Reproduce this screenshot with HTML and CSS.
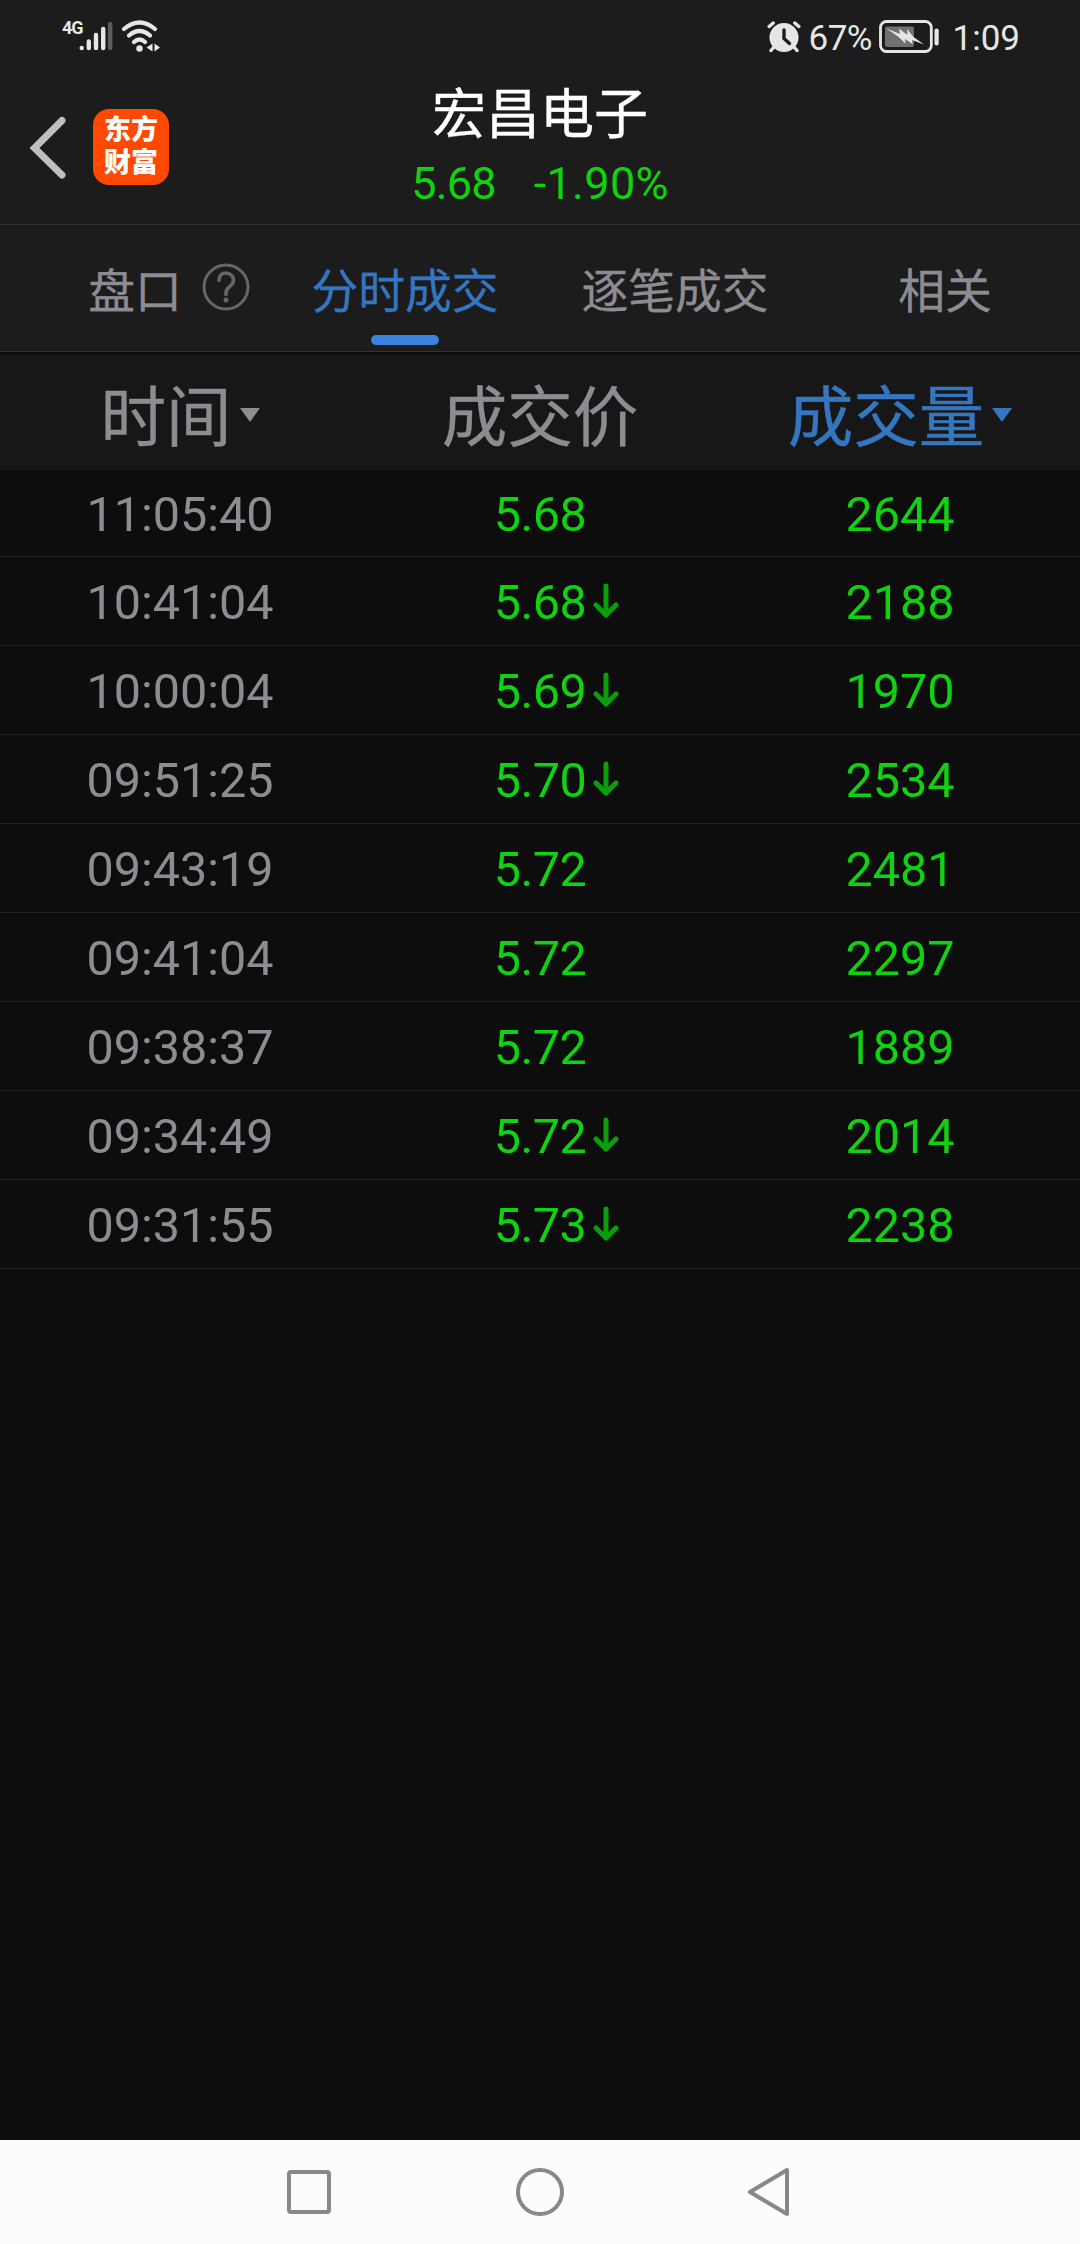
FILE: index.html
```html
<!DOCTYPE html>
<html lang="zh-CN">
<head>
  <meta charset="UTF-8" />
  <meta name="viewport" content="width=device-width, initial-scale=1.0" />
  <title>宏昌电子 - 分时成交</title>
  <link rel="stylesheet" href="styles.css">
</head>
<body>
  <div class="layout">
    <div class="status-bar">
      <div class="status-left">
        <span class="network">4G</span>
        <svg class="signal" width="34" height="32" viewBox="0 0 34 32" fill="none" stroke="#e6e6e6" stroke-width="4.4" stroke-linecap="round">
          <path d="M2.7 28v.1M9.8 21.500v6.500M17 15v13M24.200 9v19" />
          <path d="M31.200 4v24" stroke="#5c5c5c" />
        </svg>
        <svg class="wifi" width="40" height="34" viewBox="0 0 40 34" fill="none" stroke="#e6e6e6" stroke-width="4.200" stroke-linecap="round">
          <path d="M3 9q15.500-13 31 0M8 15.500q10.500-9 21 0M13 22q5.500-5 11 0" />
          <circle cx="18.500" cy="28.500" r="3.200" fill="#e6e6e6" stroke="none" />
          <path d="M31.500 23.500v8l-6-4zM33.500 23.500v8l5.500-4z" fill="#e6e6e6" stroke="none" />
        </svg>
      </div>
      <div class="status-right">
        <svg class="alarm" width="34" height="32" viewBox="0 0 34 32" fill="none" stroke="#e6e6e6" stroke-linecap="round">
          <circle cx="17" cy="16.500" r="14.500" fill="#e6e6e6" stroke="none" />
          <path d="M2.200 5.500l4-3.500M31.800 5.500l-4-3.500M7 26l-3 3.500M27 26l3 3.500" stroke-width="3.400" />
          <path d="M17 9v8.500l5.500 5" stroke="#1c1c1c" stroke-width="3.400" />
        </svg>
        <span class="percent">67%</span>
        <svg class="battery" width="62" height="34" viewBox="0 0 62 34">
          <rect x="1.500" y="1.500" width="50.800" height="30" rx="6" fill="none" stroke="#e6e6e6" stroke-width="2.800" />
          <rect x="6" y="6.500" width="29" height="20.500" rx="2" fill="#707070" />
          <path d="M7.500 8.500L21 14l-1-5.500 8.500 6.500-.5-6 6.500 8 10.500 7.500-12-4.500.5 4-7.500-5 .5 4.500-7.500-7z" fill="#e6e6e6" />
          <rect x="55.500" y="8.500" width="4.200" height="17" rx="2" fill="#e6e6e6" />
        </svg>
        <span class="clock">1:09</span>
      </div>
    </div>

    <div class="header">
      <div class="header-left">
        <svg class="back" width="40" height="66" viewBox="0 0 40 66" fill="none" stroke="#bfbfbf" stroke-width="7" stroke-linecap="round">
          <path d="M34 6.500L6.500 34 34 61" />
        </svg>
        <div class="logo"><span>东方</span><span>财富</span></div>
      </div>
      <div class="stock">
        <div class="stock-name">宏昌电子</div>
        <div class="stock-price"><span>5.68</span><span>-1.90%</span></div>
      </div>
    </div>

    <div class="tabs">
      <div class="tab">盘口
        <svg class="help" width="48" height="48" viewBox="0 0 48 48" fill="none" stroke="#666" stroke-width="3" stroke-linecap="round">
          <circle cx="24" cy="24" r="22" />
          <path d="M17 17.500C17 12.500 20 10 24 10s7.500 3 7.500 7.200c0 6.300-7.500 6.300-7.500 12.300v2" stroke-width="3.600" />
          <circle cx="24" cy="37" r="2.500" fill="#666" stroke="none" />
        </svg>
      </div>
      <div class="tab active">分时成交</div>
      <div class="tab">逐笔成交</div>
      <div class="tab">相关</div>
    </div>

    <div class="table-head">
      <div class="th">时间<i class="caret"></i></div>
      <div class="th">成交价</div>
      <div class="th sorted">成交量<i class="caret"></i></div>
    </div>

    <div class="table-body">
      <div class="row"><span class="time">11:05:40</span><span class="price">5.68</span><span class="volume">2644</span></div>
      <div class="row"><span class="time">10:41:04</span><span class="price">5.68<svg class="down" viewBox="0 0 26 36"><path d="M13 3v29M3 22l10 10 10-10" /></svg></span><span class="volume">2188</span></div>
      <div class="row"><span class="time">10:00:04</span><span class="price">5.69<svg class="down" viewBox="0 0 26 36"><path d="M13 3v29M3 22l10 10 10-10" /></svg></span><span class="volume">1970</span></div>
      <div class="row"><span class="time">09:51:25</span><span class="price">5.70<svg class="down" viewBox="0 0 26 36"><path d="M13 3v29M3 22l10 10 10-10" /></svg></span><span class="volume">2534</span></div>
      <div class="row"><span class="time">09:43:19</span><span class="price">5.72</span><span class="volume">2481</span></div>
      <div class="row"><span class="time">09:41:04</span><span class="price">5.72</span><span class="volume">2297</span></div>
      <div class="row"><span class="time">09:38:37</span><span class="price">5.72</span><span class="volume">1889</span></div>
      <div class="row"><span class="time">09:34:49</span><span class="price">5.72<svg class="down" viewBox="0 0 26 36"><path d="M13 3v29M3 22l10 10 10-10" /></svg></span><span class="volume">2014</span></div>
      <div class="row"><span class="time">09:31:55</span><span class="price">5.73<svg class="down" viewBox="0 0 26 36"><path d="M13 3v29M3 22l10 10 10-10" /></svg></span><span class="volume">2238</span></div>
    </div>

    <div class="nav-bar">
      <svg width="50" height="50" viewBox="0 0 50 50"><rect x="5" y="5" width="40" height="40" rx="2" /></svg>
      <svg width="50" height="50" viewBox="0 0 50 50"><circle cx="25" cy="25" r="22" /></svg>
      <svg width="50" height="50" viewBox="0 0 50 50"><path d="M41 3v44L4 25z" /></svg>
    </div>
  </div>
</body>
</html>
```
FILE: styles.css
```css
:root {
  --bg: #0d0d0d;
  --bar: #1c1c1c;
  --line: #333333;
  --gray: #8e8c92;
  --blue: #3476c0;
  --green: #10d210;
  --status: #e6e6e6;
}

* {
  box-sizing: border-box;
}

body, html {
  margin: 0;
  padding: 0;
  height: 100%;
  background: var(--bg);
  font-family: Roboto, "Noto Sans CJK SC", sans-serif;
}

svg {
  display: block;
  flex: none;
}

.layout {
  width: 1080px;
  height: 2244px;
  display: flex;
  flex-direction: column;
  background: var(--bg);
}

/* status bar */
.status-bar {
  height: 70px;
  display: flex;
  justify-content: space-between;
  padding: 0 62px;
  background: var(--bar);
  color: var(--status);
}

.status-left,
.status-right {
  display: flex;
  align-items: flex-start;
  padding-top: 20px;
}

.network {
  width: 17px;
  font-size: 18px;
  line-height: 16px;
  font-weight: 700;
  letter-spacing: -1px;
}

.wifi {
  margin-left: 8px;
}

.alarm {
  margin: 1px 8px 0 0;
}

.percent,
.clock {
  font-size: 35px;
  line-height: 38px;
}

.percent {
  width: 70px;
  letter-spacing: -.5px;
}

.clock {
  margin-left: 12px;
  margin-right: -2px;
}

/* header */
.header {
  height: 155px;
  display: grid;
  grid-template-columns: 360px 360px 360px;
  background: var(--bar);
  border-bottom: 1px solid var(--line);
}

.header-left {
  display: flex;
  align-items: center;
  gap: 25px;
  padding-left: 28px;
}

.logo {
  width: 76px;
  height: 76px;
  border-radius: 16px;
  display: flex;
  flex-direction: column;
  align-items: center;
  justify-content: center;
  background: #ff4800;
  color: #fff;
  font-size: 27px;
  line-height: 33px;
  font-weight: 900;
}

.stock {
  display: flex;
  flex-direction: column;
  align-items: center;
  padding-top: 12px;
}

.stock-name {
  color: #fff;
  font-size: 54px;
  line-height: 68px;
  -webkit-text-stroke: .4px;
}

.stock-price {
  display: flex;
  gap: 38px;
  color: var(--green);
  font-size: 45px;
  line-height: 68px;
}

.stock-price span:first-child {
  letter-spacing: -.8px;
}

.stock-price span:last-child {
  letter-spacing: .3px;
}

/* tabs */
.tabs {
  height: 127px;
  display: grid;
  grid-template-columns: repeat(4, 1fr);
  background: var(--bar);
  border-bottom: 1px solid var(--line);
}

.tab {
  position: relative;
  display: flex;
  align-items: center;
  justify-content: center;
  color: var(--gray);
  font-size: 46.8px;
  padding-bottom: 2px;
  -webkit-text-stroke: .3px;
}

.tab.active {
  color: var(--blue);
}

.tab.active::after {
  content: "";
  position: absolute;
  left: 101px;
  bottom: 6px;
  width: 68px;
  height: 10px;
  border-radius: 5px;
  background: #3882e0;
}

.help {
  margin: 0 -68px 0 20px;
}

/* table */
.table-head {
  height: 115px;
  margin-top: 3px;
  display: grid;
  grid-template-columns: repeat(3, 1fr);
  background: #171717;
}

.th {
  display: flex;
  align-items: center;
  justify-content: center;
  color: var(--gray);
  font-size: 65.5px;
  -webkit-text-stroke: .4px;
}

.th.sorted {
  color: var(--blue);
}

.caret {
  margin: 5px 0 0 8px;
  border: 10px solid transparent;
  border-top: 14px solid currentColor;
  border-bottom: 0;
}

.table-body {
  flex: 1;
}

.row {
  height: 89px;
  padding-top: 3px;
  display: grid;
  grid-template-columns: repeat(3, 1fr);
  align-items: center;
  border-bottom: 1px solid #222;
  color: var(--green);
  font-size: 48.5px;
}

.row:first-child {
  height: 87px;
}

.row span {
  display: flex;
  align-items: center;
  justify-content: center;
}

.row .time {
  color: var(--gray);
}

.row .price {
  letter-spacing: -.5px;
}

.down {
  width: 26px;
  height: 36px;
  margin: -3px -33px 0 7px;
  fill: none;
  stroke: #0a9e0a;
  stroke-width: 5;
  stroke-linecap: round;
  stroke-linejoin: round;
}

/* system navigation */
.nav-bar {
  height: 104px;
  display: flex;
  justify-content: center;
  align-items: center;
  gap: 181px;
  background: #fcfcfc;
}

.nav-bar svg {
  fill: none;
  stroke: #888;
  stroke-width: 4;
  stroke-linejoin: round;
}
```
